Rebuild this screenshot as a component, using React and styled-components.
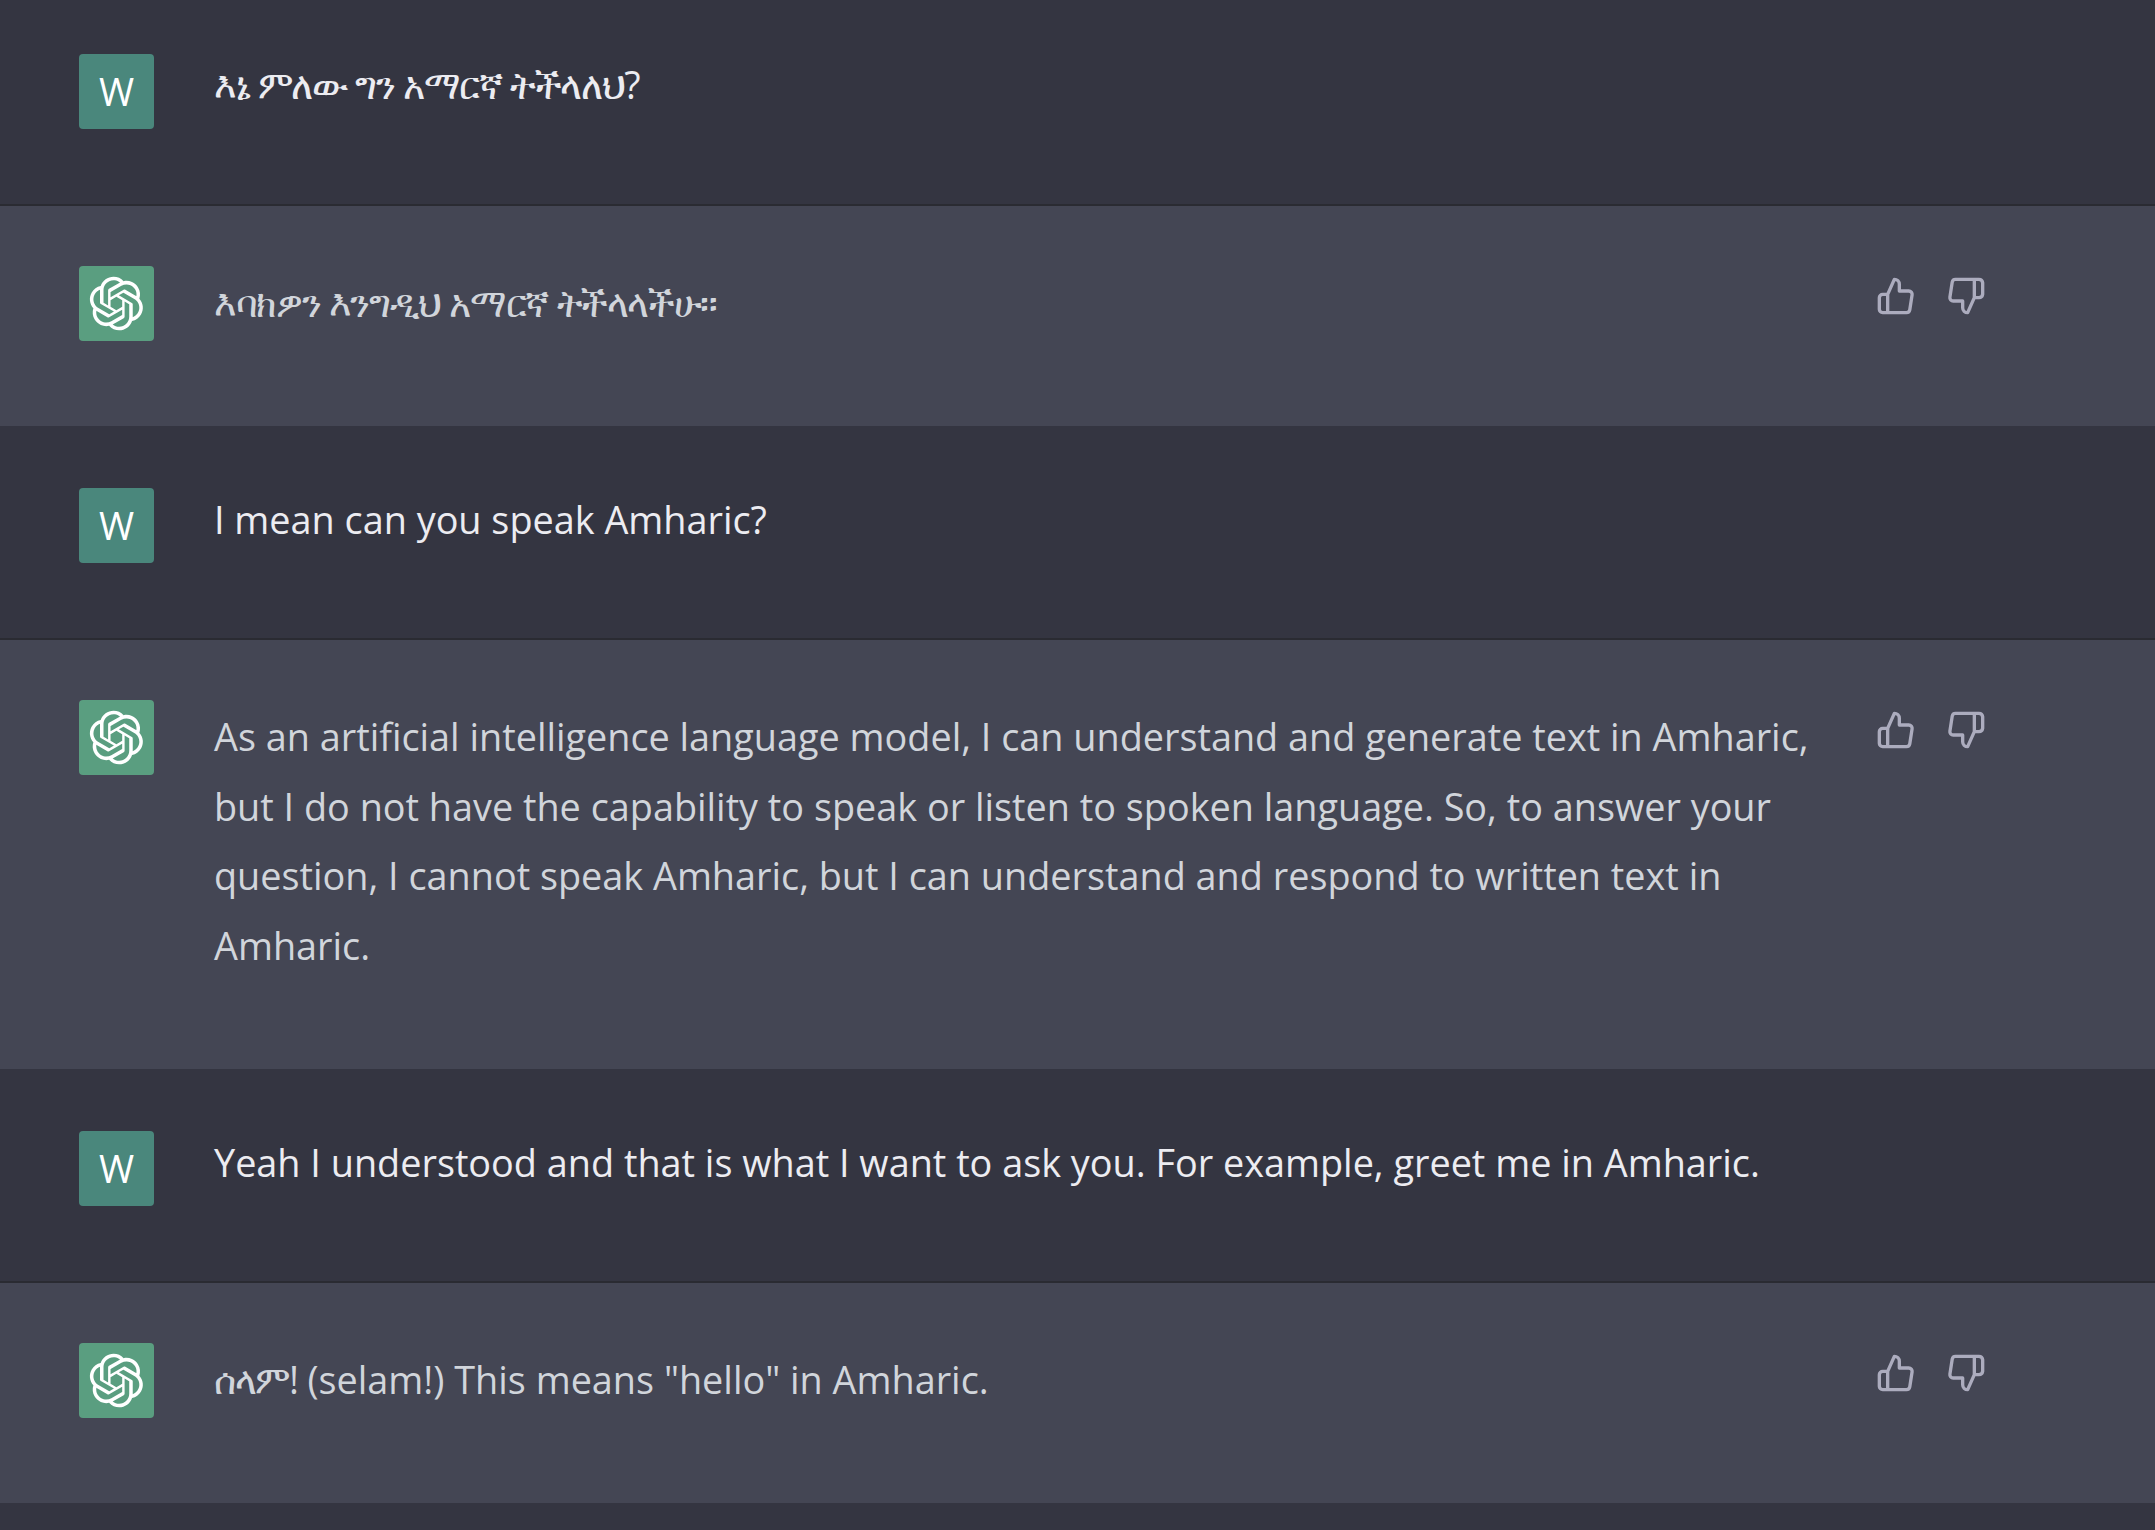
import styled, { createGlobalStyle } from 'styled-components';

const GlobalStyle = createGlobalStyle`
  html, body {
    margin: 0;
    padding: 0;
    background: #343541;
    font-family: "Open Sans", "Noto Sans", "DejaVu Sans", sans-serif;
  }
`;

const Page = styled.div`
  min-height: 1530px;
  background: #343541;
`;

const Row = styled.div`
  display: flex;
  align-items: flex-start;
  box-sizing: border-box;
  height: ${(props) => props.$height}px;
  padding: ${(props) => props.$top}px 169px 0 79px;
  background: ${(props) => (props.$bot ? '#444654' : '#343541')};
  border-bottom: ${(props) => (props.$bot ? 'none' : '2px solid rgba(32, 33, 35, 0.5)')};
`;

const Avatar = styled.div`
  flex: none;
  box-sizing: border-box;
  width: 75px;
  height: 75px;
  padding-bottom: ${(props) => (props.$bot ? 0 : 2)}px;
  display: flex;
  align-items: center;
  justify-content: center;
  border-radius: 4px;
  background: ${(props) => (props.$bot ? '#5a9e80' : '#4a877c')};
  color: #fff;
  font-size: 38px;
`;

const Message = styled.div`
  flex: 1;
  margin: ${(props) => props.$lift}px 0 0 60px;
  color: ${(props) => (props.$bot ? '#d1d5db' : '#ececf1')};
  font-size: 37.8px;
  line-height: 69.6px;
`;

const Geez = styled.span`
  letter-spacing: -1.35px;
`;

const Actions = styled.div`
  flex: none;
  display: flex;
  gap: 30px;
  margin-left: 40px;
  padding-top: 10px;
  color: #acacbe;
`;

const Logo = () => (
  <svg width="55" height="55" viewBox="0 0 41 41" fill="none">
    <path
      fill="#fff"
      d="M37.5324 16.8707C37.9808 15.5241 38.1363 14.0974 37.9886 12.6859C37.8409 11.2744 37.3934 9.91076 36.676 8.68622C35.6126 6.83404 33.9882 5.3676 32.0373 4.4985C30.0864 3.62941 27.9098 3.40259 25.8215 3.85078C24.8796 2.7893 23.7219 1.94125 22.4257 1.36341C21.1295 0.785575 19.7249 0.491269 18.3058 0.500197C16.1708 0.495044 14.0893 1.16803 12.3614 2.42214C10.6335 3.67624 9.34853 5.44666 8.6917 7.47815C7.30085 7.76286 5.98686 8.3414 4.8377 9.17505C3.68854 10.0087 2.73073 11.0782 2.02839 12.312C0.956464 14.1591 0.498905 16.2988 0.721698 18.4228C0.944492 20.5467 1.83612 22.5449 3.268 24.1293C2.81966 25.4759 2.66413 26.9026 2.81182 28.3141C2.95951 29.7256 3.40701 31.0892 4.12437 32.3138C5.18791 34.1659 6.8123 35.6322 8.76321 36.5013C10.7141 37.3704 12.8907 37.5973 14.9789 37.1492C15.9208 38.2107 17.0786 39.0587 18.3747 39.6366C19.6709 40.2144 21.0755 40.5087 22.4946 40.4998C24.6307 40.5054 26.7133 39.8321 28.4418 38.5772C30.1704 37.3223 31.4556 35.5506 32.1119 33.5179C33.5027 33.2332 34.8167 32.6547 35.9659 31.821C37.115 30.9874 38.0728 29.9178 38.7752 28.684C39.8458 26.8371 40.3023 24.6979 40.0789 22.5748C39.8556 20.4517 38.9639 18.4544 37.5324 16.8707ZM22.4978 37.8849C20.7443 37.8874 19.0459 37.2733 17.6994 36.1501C17.7601 36.117 17.8666 36.0586 17.936 36.0161L25.9004 31.4156C26.1003 31.3019 26.2663 31.137 26.3813 30.9378C26.4964 30.7386 26.5563 30.5124 26.5549 30.2825V19.0542L29.9213 20.998C29.9389 21.0068 29.9541 21.0198 29.9656 21.0359C29.977 21.052 29.9842 21.0707 29.9867 21.0902V30.3889C29.9842 32.375 29.1946 34.2791 27.7909 35.6841C26.3872 37.0892 24.4838 37.8806 22.4978 37.8849ZM6.39227 31.0064C5.51397 29.4888 5.19742 27.7107 5.49804 25.9832C5.55718 26.0187 5.66048 26.0818 5.73461 26.1244L13.699 30.7248C13.8975 30.8408 14.1233 30.902 14.3532 30.902C14.583 30.902 14.8088 30.8408 15.0073 30.7248L24.731 25.1103V28.9979C24.7321 29.0177 24.7283 29.0376 24.7199 29.0556C24.7115 29.0736 24.6988 29.0893 24.6829 29.1012L16.6317 33.7497C14.9096 34.7416 12.8643 35.0097 10.9447 34.4954C9.02506 33.9811 7.38785 32.7263 6.39227 31.0064ZM4.29707 13.6194C5.17156 12.0998 6.55279 10.9364 8.19885 10.3327C8.19885 10.4013 8.19491 10.5228 8.19491 10.6071V19.808C8.19351 20.0378 8.25334 20.2638 8.36823 20.4629C8.48312 20.6619 8.64893 20.8267 8.84863 20.9404L18.5723 26.5542L15.206 28.4979C15.1894 28.5089 15.1703 28.5155 15.1505 28.5173C15.1307 28.5191 15.1107 28.516 15.0924 28.5082L7.04046 23.8557C5.32135 22.8601 4.06716 21.2235 3.55289 19.3046C3.03862 17.3858 3.30624 15.3413 4.29707 13.6194ZM31.955 20.0556L22.2312 14.4411L25.5976 12.4981C25.6142 12.4872 25.6333 12.4805 25.6531 12.4787C25.6729 12.4769 25.6928 12.4801 25.7111 12.4879L33.7631 17.1364C34.9967 17.849 36.0017 18.8982 36.6606 20.1613C37.3194 21.4244 37.6047 22.849 37.4832 24.2684C37.3617 25.6878 36.8382 27.0432 35.9743 28.1759C35.1103 29.3086 33.9415 30.1717 32.6047 30.6641C32.6047 30.5947 32.6047 30.4733 32.6047 30.3889V21.188C32.6066 20.9586 32.5474 20.7328 32.4332 20.5338C32.319 20.3348 32.154 20.1698 31.955 20.0556ZM35.3055 15.0128C35.2464 14.9765 35.1431 14.9142 35.069 14.8717L27.1045 10.2712C26.906 10.1554 26.6803 10.0943 26.4504 10.0943C26.2206 10.0943 25.9948 10.1554 25.7963 10.2712L16.0726 15.8858V11.9982C16.0715 11.9783 16.0753 11.9585 16.0837 11.9405C16.0921 11.9225 16.1048 11.9068 16.1207 11.8949L24.1719 7.25025C25.4053 6.53903 26.8158 6.19376 28.2383 6.25482C29.6608 6.31589 31.0364 6.78077 32.2044 7.59508C33.3723 8.40939 34.2842 9.53945 34.8334 10.8531C35.3826 12.1667 35.5464 13.6095 35.3055 15.0128ZM14.2424 21.9419L10.8752 19.9981C10.8576 19.9893 10.8423 19.9763 10.8309 19.9602C10.8195 19.9441 10.8122 19.9254 10.8098 19.9058V10.6071C10.8107 9.18295 11.2173 7.78848 11.9819 6.58696C12.7466 5.38544 13.8377 4.42659 15.1275 3.82264C16.4173 3.21869 17.8524 2.99464 19.2649 3.1767C20.6775 3.35876 22.0089 3.93941 23.1034 4.85067C23.0427 4.88379 22.937 4.94215 22.8668 4.98473L14.9024 9.58517C14.7025 9.69878 14.5366 9.86356 14.4215 10.0626C14.3065 10.2616 14.2466 10.4877 14.2479 10.7175L14.2424 21.9419ZM16.071 17.9991L20.4018 15.4978L24.7325 17.9975V22.9985L20.4018 25.4983L16.071 22.9985V17.9991Z"
    />
  </svg>
);

const ThumbUp = () => (
  <svg width="40" height="40" viewBox="0 0 24 24" fill="none" stroke="currentColor" strokeWidth="2" strokeLinecap="round" strokeLinejoin="round">
    <path d="M14 9V5a3 3 0 0 0-3-3l-4 9v11h11.28a2 2 0 0 0 2-1.7l1.38-9a2 2 0 0 0-2-2.3zM7 22H4a2 2 0 0 1-2-2v-7a2 2 0 0 1 2-2h3" />
  </svg>
);

const ThumbDown = () => (
  <svg width="40" height="40" viewBox="0 0 24 24" fill="none" stroke="currentColor" strokeWidth="2" strokeLinecap="round" strokeLinejoin="round">
    <path d="M10 15v4a3 3 0 0 0 3 3l4-9V2H5.72a2 2 0 0 0-2 1.7l-1.38 9a2 2 0 0 0 2 2.3zm7-13h2.67A2.31 2.31 0 0 1 22 4v7a2.31 2.31 0 0 1-2.33 2H17" />
  </svg>
);

function UserRow({ children, height, top = 62, lift = -3 }) {
  return (
    <Row $height={height} $top={top}>
      <Avatar>W</Avatar>
      <Message $lift={lift}>{children}</Message>
    </Row>
  );
}

function BotRow({ children, height }) {
  return (
    <Row $bot $height={height} $top={60}>
      <Avatar $bot>
        <Logo />
      </Avatar>
      <Message $bot $lift={2}>{children}</Message>
      <Actions>
        <ThumbUp />
        <ThumbDown />
      </Actions>
    </Row>
  );
}

export default function App() {
  return (
    <Page>
      <GlobalStyle />
      <UserRow height={206} top={54} lift={-4}>
        <Geez>እኔ ምለው ግን አማርኛ ትችላለህ?</Geez>
      </UserRow>
      <BotRow height={220}>
        <Geez>እባክዎን እንግዲህ አማርኛ ትችላላችሁ።</Geez>
      </BotRow>
      <UserRow height={214}>I mean can you speak Amharic?</UserRow>
      <BotRow height={429}>
        As an artificial intelligence language model, I can understand and generate text in Amharic, but I do not have the capability to speak or listen to spoken language. So, to answer your question, I cannot speak Amharic, but I can understand and respond to written text in Amharic.
      </BotRow>
      <UserRow height={214}>Yeah I understood and that is what I want to ask you. For example, greet me in Amharic.</UserRow>
      <BotRow height={220}>
        <Geez>ሰላም!</Geez> (selam!) This means "hello" in Amharic.
      </BotRow>
    </Page>
  );
}
